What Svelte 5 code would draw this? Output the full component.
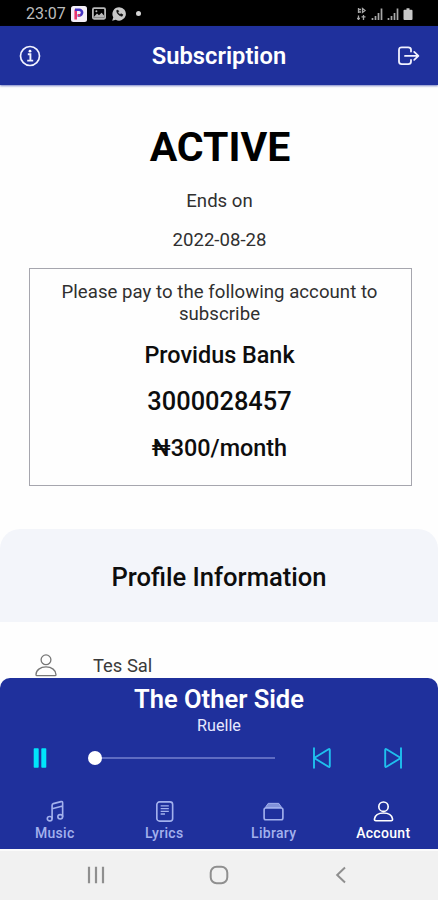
<script lang="ts">
  const subscription = {
    status: 'ACTIVE',
    endsOn: '2022-08-28',
    bank: 'Providus Bank',
    account: '3000028457',
    price: '₦300/month',
  };

  const track = { title: 'The Other Side', artist: 'Ruelle' };

  const tabs = ['Music', 'Lyrics', 'Library', 'Account'];
  let active = $state('Account');
  let progress = $state(0);
</script>

<div class="phone">
  <div class="status-bar">
    <span class="clock">23:07</span>
    <svg class="app-badge" width="16" height="16" viewBox="0 0 16 16" fill="none">
      <rect width="16" height="16" rx="2.5" fill="#f4eff8" />
      <path d="M4.7 13.5V3.5" stroke="#e8356d" stroke-width="2.6" />
      <path d="M4 3.7h4.2a2.9 2.9 0 0 1 0 5.8H6.5" stroke="#4535c4" stroke-width="2.6" />
      <path d="M7 9.3h2.2" stroke="#e8356d" stroke-width="2.2" />
    </svg>
    <svg class="picture" width="14" height="13" viewBox="0 0 14 13" fill="none">
      <rect x=".9" y="1.2" width="12.2" height="10.6" rx="1.2" stroke="#b8b8b8" stroke-width="1.8" />
      <path d="M2 9.7 5 6.5l2 1.8 2.6-2.5L12 8.5v2.3H2z" fill="#b8b8b8" />
      <circle cx="4.4" cy="4.2" r="1" fill="#b8b8b8" />
    </svg>
    <svg class="chat" width="14" height="14" viewBox="0 0 14 14" fill="none">
      <path d="M7.2.2a6.7 6.7 0 1 1-3.4 12.5L.2 13.8l1.1-3.6A6.7 6.7 0 0 1 7.2.2z" fill="#c8c8c8" />
      <path d="M4.7 3.6c.3 3.2 2.3 5.2 5.4 5.6l.6-1.6-1.7-.8-.9.8C7 7.2 6.3 6.4 5.9 5.6l.7-1-.6-1.4z" fill="#111" stroke="#111" stroke-width=".8" />
    </svg>
    <span class="dot"></span>
    <svg class="signal" width="57" height="14" viewBox="0 0 57 14" fill="none" stroke="#a8a8a8">
      <path d="M1 2.5h3M1 5h3M1.5 1v5M5.5 1.5 8 3.5 5.5 5.5zM1.5 8.5v4.5M0 11.5h3M6.5 8v5M4.5 9.8h4" stroke-width="1.3" />
      <path d="M15.5 13v-2M18.5 13V9M21.5 13V6M24.5 13V1.5M31.5 13v-2M34.5 13V9M37.5 13V6M40.5 13V1.5" stroke-width="1.7" />
      <path d="M47.5 2.8h2V1.2h3v1.6h2q1 0 1 1V12q0 1-1 1h-7q-1 0-1-1V3.8q0-1 1-1z" fill="#c8c8c8" stroke="none" />
    </svg>
  </div>

  <header>
    <button aria-label="About">
      <svg width="22" height="22" viewBox="0 0 22 22" fill="none" stroke="#f1f2ff" stroke-width="1.7">
        <circle cx="11" cy="11" r="9.5" />
        <path d="M8.8 9.3h2.6v6.3M8.2 15.6h6" stroke-width="1.9" />
        <circle cx="11" cy="6.2" r="1.4" fill="#fff" stroke="none" />
      </svg>
    </button>
    <h1>Subscription</h1>
    <button aria-label="Log out">
      <svg width="24" height="22" viewBox="0 0 24 22" fill="none" stroke="#f1f2ff" stroke-width="1.8" stroke-linecap="round" stroke-linejoin="round">
        <path d="M14 6.5V4.8q0-2.5-2.8-2.5H4.8Q2 2.3 2 5v11.5q0 2.7 2.8 2.7h6.4q2.8 0 2.8-2.7V15" />
        <path d="M8 10.9h13M17.2 6.9l4.2 4-4.2 4" />
      </svg>
    </button>
  </header>

  <main>
    <section class="plan">
      <h2>{subscription.status}</h2>
      <p>Ends on</p>
      <p>{subscription.endsOn}</p>
      <div class="pay-box">
        <p class="hint">Please pay to the following account to subscribe</p>
        <strong>{subscription.bank}</strong>
        <strong class="number">{subscription.account}</strong>
        <strong>{subscription.price}</strong>
      </div>
    </section>

    <section class="profile">
      <h3>Profile Information</h3>
      <div class="profile-row">
        <svg width="24" height="26" viewBox="0 0 24 26" fill="none" stroke="#777" stroke-width="1.3">
          <circle cx="12" cy="6.8" r="4.9" />
          <path d="M2 21.7c0-4.5 4.3-7.8 10-7.8s10 3.3 10 7.8q0 1-1 1H3q-1 0-1-1z" stroke-linejoin="round" />
        </svg>
        <span>Tes Sal</span>
      </div>
    </section>
  </main>

  <footer>
    <div class="title">{track.title}</div>
    <div class="artist">{track.artist}</div>

    <div class="controls">
      <button class="pause" aria-label="Pause">
        <svg width="14" height="20" viewBox="0 0 14 20" fill="#00e5fb">
          <rect x=".7" y=".3" width="5" height="19.4" rx=".8" />
          <rect x="8.3" y=".3" width="5" height="19.4" rx=".8" />
        </svg>
      </button>
      <div class="seek">
        <span class="thumb" style="left: {progress}%"></span>
      </div>
      <button class="prev" aria-label="Previous">
        <svg width="20" height="22" viewBox="0 0 20 22" fill="none" stroke="#1fc0ee" stroke-width="1.9" stroke-linecap="round" stroke-linejoin="round">
          <path d="M2 1.2v19.6M17.8 2.9v16.2q0 1.5-1.3.7L3.4 11.7q-1.1-.7 0-1.4l13.1-8.1q1.3-.8 1.3.7z" />
        </svg>
      </button>
      <button class="next" aria-label="Next">
        <svg width="20" height="22" viewBox="0 0 20 22" fill="none" stroke="#1fc0ee" stroke-width="1.9" stroke-linecap="round" stroke-linejoin="round">
          <path d="M18 1.2v19.6M2.2 2.9v16.2q0 1.5 1.3.7l13.1-8.1q1.1-.7 0-1.4L3.5 2.2q-1.3-.8-1.3.7z" />
        </svg>
      </button>
    </div>

    <nav>
      {#each tabs as tab}
        <button class="tab" class:active={tab === active} onclick={() => (active = tab)}>
          <svg width="23" height="23" viewBox="0 0 24 24" fill="none" stroke="currentColor" stroke-width="1.7" stroke-linejoin="round">
            {#if tab === 'Music'}
              <ellipse cx="7" cy="19.5" rx="2.5" ry="2.3" />
              <ellipse cx="18" cy="17.5" rx="2.5" ry="2.3" />
              <path d="M9.5 19.5v-14q0-1.3 1.3-1.7l8-2.1q1.7-.4 1.7 1.3v14.500M9.500 9.200l11-2.900" />
            {:else if tab === 'Lyrics'}
              <rect x="4" y="2" width="16.5" height="20" rx="2.8" />
              <path d="M8 6.2h8.5M8 9h8.5M8 11.8h8.5M8 14.6h4.5" stroke-width="1.4" />
            {:else if tab === 'Library'}
              <rect x="2.2" y="8.3" width="19.6" height="12.3" rx="1.8" />
              <path d="M3.5 7.8 6.5 3.5h11l3 4.3z" fill="currentColor" stroke-width="1" fill-opacity=".75" />
            {:else}
              <circle cx="12" cy="7" r="4.9" />
              <path d="M2.6 19.7c.7-4 4.7-6.1 9.4-6.1s8.7 2.1 9.4 6.1q.3 1.9-1.5 1.9H4.1q-1.8 0-1.5-1.9z" />
            {/if}
          </svg>
          <span>{tab}</span>
        </button>
      {/each}
    </nav>
  </footer>

  <div class="system-nav">
    <svg width="20" height="20" viewBox="0 0 20 20" stroke="#8f8f8f" stroke-width="2.2"><path d="M3 1.7v16.6M10 1.7v16.6M17 1.7v16.6" /></svg>
    <svg width="20" height="20" viewBox="0 0 20 20" fill="none" stroke="#8f8f8f" stroke-width="2"><rect x="1.7" y="1.7" width="16.6" height="16.6" rx="6" /></svg>
    <svg width="20" height="20" viewBox="0 0 20 20" fill="none" stroke="#8f8f8f" stroke-width="2"><path d="M14 2.5 6.2 10l7.8 7.5" /></svg>
  </div>
</div>

<style>
  :global(body) { margin: 0; background: #fff; }

  .phone {
    width: 438px; height: 900px; overflow: hidden;
    display: flex; flex-direction: column;
    font-family: Roboto, "Liberation Sans", sans-serif;
    color: #0d0d0d; background: #fefefe;
  }
  h1, h2, h3, p { margin: 0; }
  button { border: 0; padding: 0; background: none; font: inherit; color: inherit; display: flex; }
  svg { display: block; flex-shrink: 0; }

  .status-bar {
    height: 26px; flex-shrink: 0; box-sizing: border-box; padding: 1px 24px 0 26px;
    display: flex; align-items: center; background: #000; color: #bcbcbc;
  }
  .clock { width: 45px; font-size: 16px; line-height: 26px; }
  .picture { margin-left: 5px; }
  .chat { margin-left: 6px; }
  .dot { width: 5px; height: 5px; margin-left: 10px; border-radius: 50%; background: #d5d5d5; }
  .signal { margin-left: auto; }

  header {
    height: 59px; flex-shrink: 0; box-sizing: border-box; padding: 0 17px 0 19px;
    display: flex; align-items: center; justify-content: space-between;
    background: #1f309c; color: #fff; z-index: 1;
    box-shadow: 0 1px 2px rgba(31, 48, 156, 0.6);
  }
  h1 { font-size: 23.7px; font-weight: 600; line-height: 28px; }

  main { flex: 1; min-height: 0; }
  .plan { padding: 38px 26px 0 29px; text-align: center; }
  h2 { font-size: 41px; font-weight: 700; line-height: 48px; margin: 0 1px 19px 0; color: #000; }
  .plan p { font-size: 18.6px; line-height: 22px; color: #303030; }
  .plan > p { margin: 0 2px 17px 0; }
  .pay-box {
    height: 218px; box-sizing: border-box; padding: 12px 25px 0 23px;
    border: 1px solid #a6a6ae; display: flex; flex-direction: column;
  }
  .pay-box .hint { margin-bottom: 16px; letter-spacing: 0.04px; }
  strong { font-size: 23.4px; font-weight: 500; line-height: 28px; margin-bottom: 18.3px; }
  .number { font-size: 25.4px; }

  .profile { margin-top: 43px; }
  h3 {
    height: 93px; padding-top: 2px; box-sizing: border-box; background: #f3f5fa; border-radius: 20px 20px 0 0;
    font-size: 25.6px; font-weight: 500; line-height: 92px; text-align: center;
  }
  .profile-row { display: flex; gap: 35px; align-items: center; padding: 31px 34px 0; font-size: 18.4px; line-height: 26px; color: #3a3a3a; }

  footer {
    height: 171px; flex-shrink: 0; z-index: 1;
    background: #1f309c; color: #fff; border-radius: 10px 10px 0 0; text-align: center;
  }
  .title { padding-top: 7px; font-size: 25.5px; font-weight: 600; line-height: 29px; }
  .artist { font-size: 16.2px; line-height: 23px; color: #e6e8ff; }
  .controls { display: flex; align-items: center; height: 41px; padding: 0 35px 0 33px; }
  .seek { position: relative; width: 180px; height: 2px; margin-left: 48px; background: #5f6cc2; }
  .thumb { position: absolute; top: -6px; width: 14px; height: 14px; margin-left: -7px; border-radius: 50%; background: #fff; }
  .prev { margin-left: 37px; }
  .next { margin-left: auto; }

  nav { display: grid; grid-template-columns: repeat(4, 1fr); padding-top: 22px; }
  .tab { flex-direction: column; align-items: center; color: #a3b1ed; font-size: 14px; font-weight: 500; }
  .tab span { line-height: 20px; letter-spacing: 0.3px; }
  .tab.active { color: #fff; }

  .system-nav {
    height: 51px; flex-shrink: 0; box-sizing: border-box; border-top: 2px solid #fbfbfb;
    display: flex; align-items: center; justify-content: space-between; padding: 0 87px 2px 86px; background: #f1f1f1;
  }
</style>
